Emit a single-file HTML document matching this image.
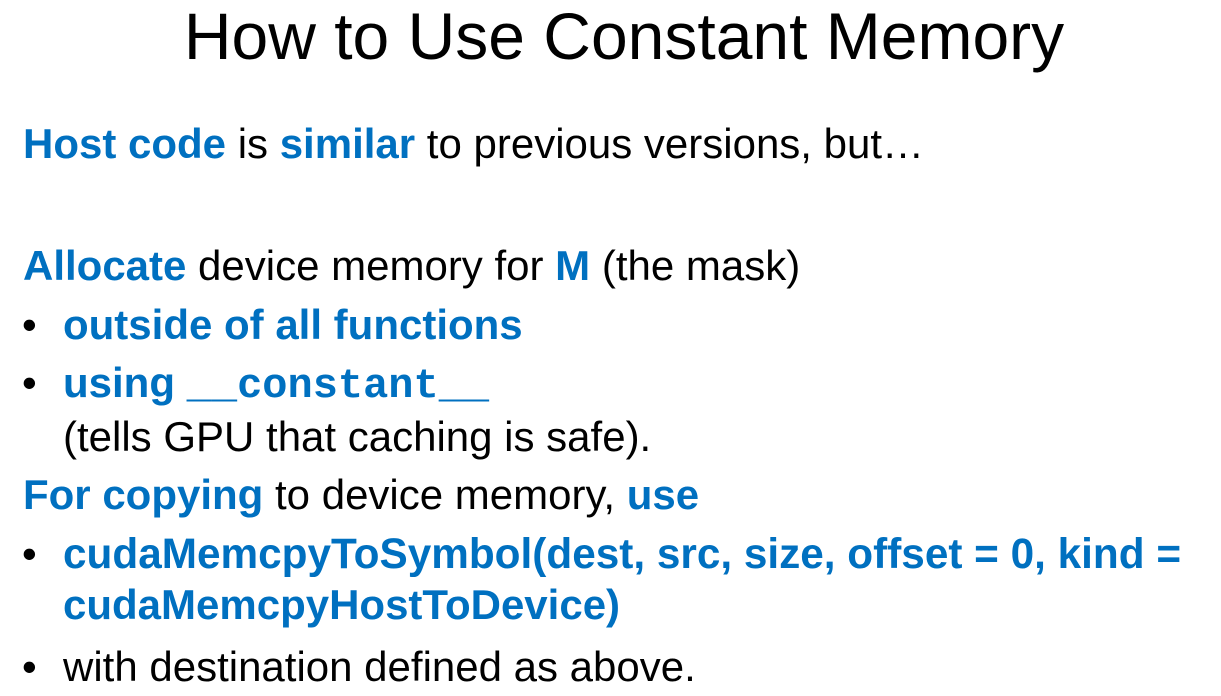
<!DOCTYPE html>
<html><head><meta charset="utf-8"><style>
html,body{margin:0;padding:0;background:#fff;width:1221px;height:696px;overflow:hidden;position:relative}
div{position:absolute;white-space:nowrap;font-family:"Liberation Sans",Arial,sans-serif;line-height:1;color:#000}
.t{font-size:66px;left:0;width:1248px;text-align:center;top:3px}
.l{font-size:42px}
b{color:#0070C0}
.m{font-family:"Liberation Mono",monospace;font-weight:bold;color:#0070C0;font-size:42px}
.bu{left:22px}
</style></head><body>
<div class="t">How to Use Constant Memory</div>
<div class="l" style="left:23px;top:123px"><b>Host code</b> is <b>similar</b> to previous versions, but…</div>
<div class="l" style="left:23px;top:245px"><b>Allocate</b> device memory for <b>M</b> (the mask)</div>
<div class="l bu" style="top:304px">•</div>
<div class="l" style="left:63px;top:304px"><b>outside of all functions</b></div>
<div class="l bu" style="top:362px">•</div>
<div class="l" style="left:63px;top:362px"><b>using</b> <span class="m">__constant__</span></div>
<div class="l" style="left:63px;top:416px">(tells GPU that caching is safe).</div>
<div class="l" style="left:23px;top:474px"><b>For copying</b> to device memory, <b>use</b></div>
<div class="l bu" style="top:533px">•</div>
<div class="l" style="left:63px;top:533px;font-size:42.3px"><b>cudaMemcpyToSymbol(dest, src, size, offset = 0, kind =</b></div>
<div class="l" style="left:63px;top:584px"><b>cudaMemcpyHostToDevice)</b></div>
<div class="l bu" style="top:646px">•</div>
<div class="l" style="left:63px;top:646px">with destination defined as above.</div>
</body></html>
